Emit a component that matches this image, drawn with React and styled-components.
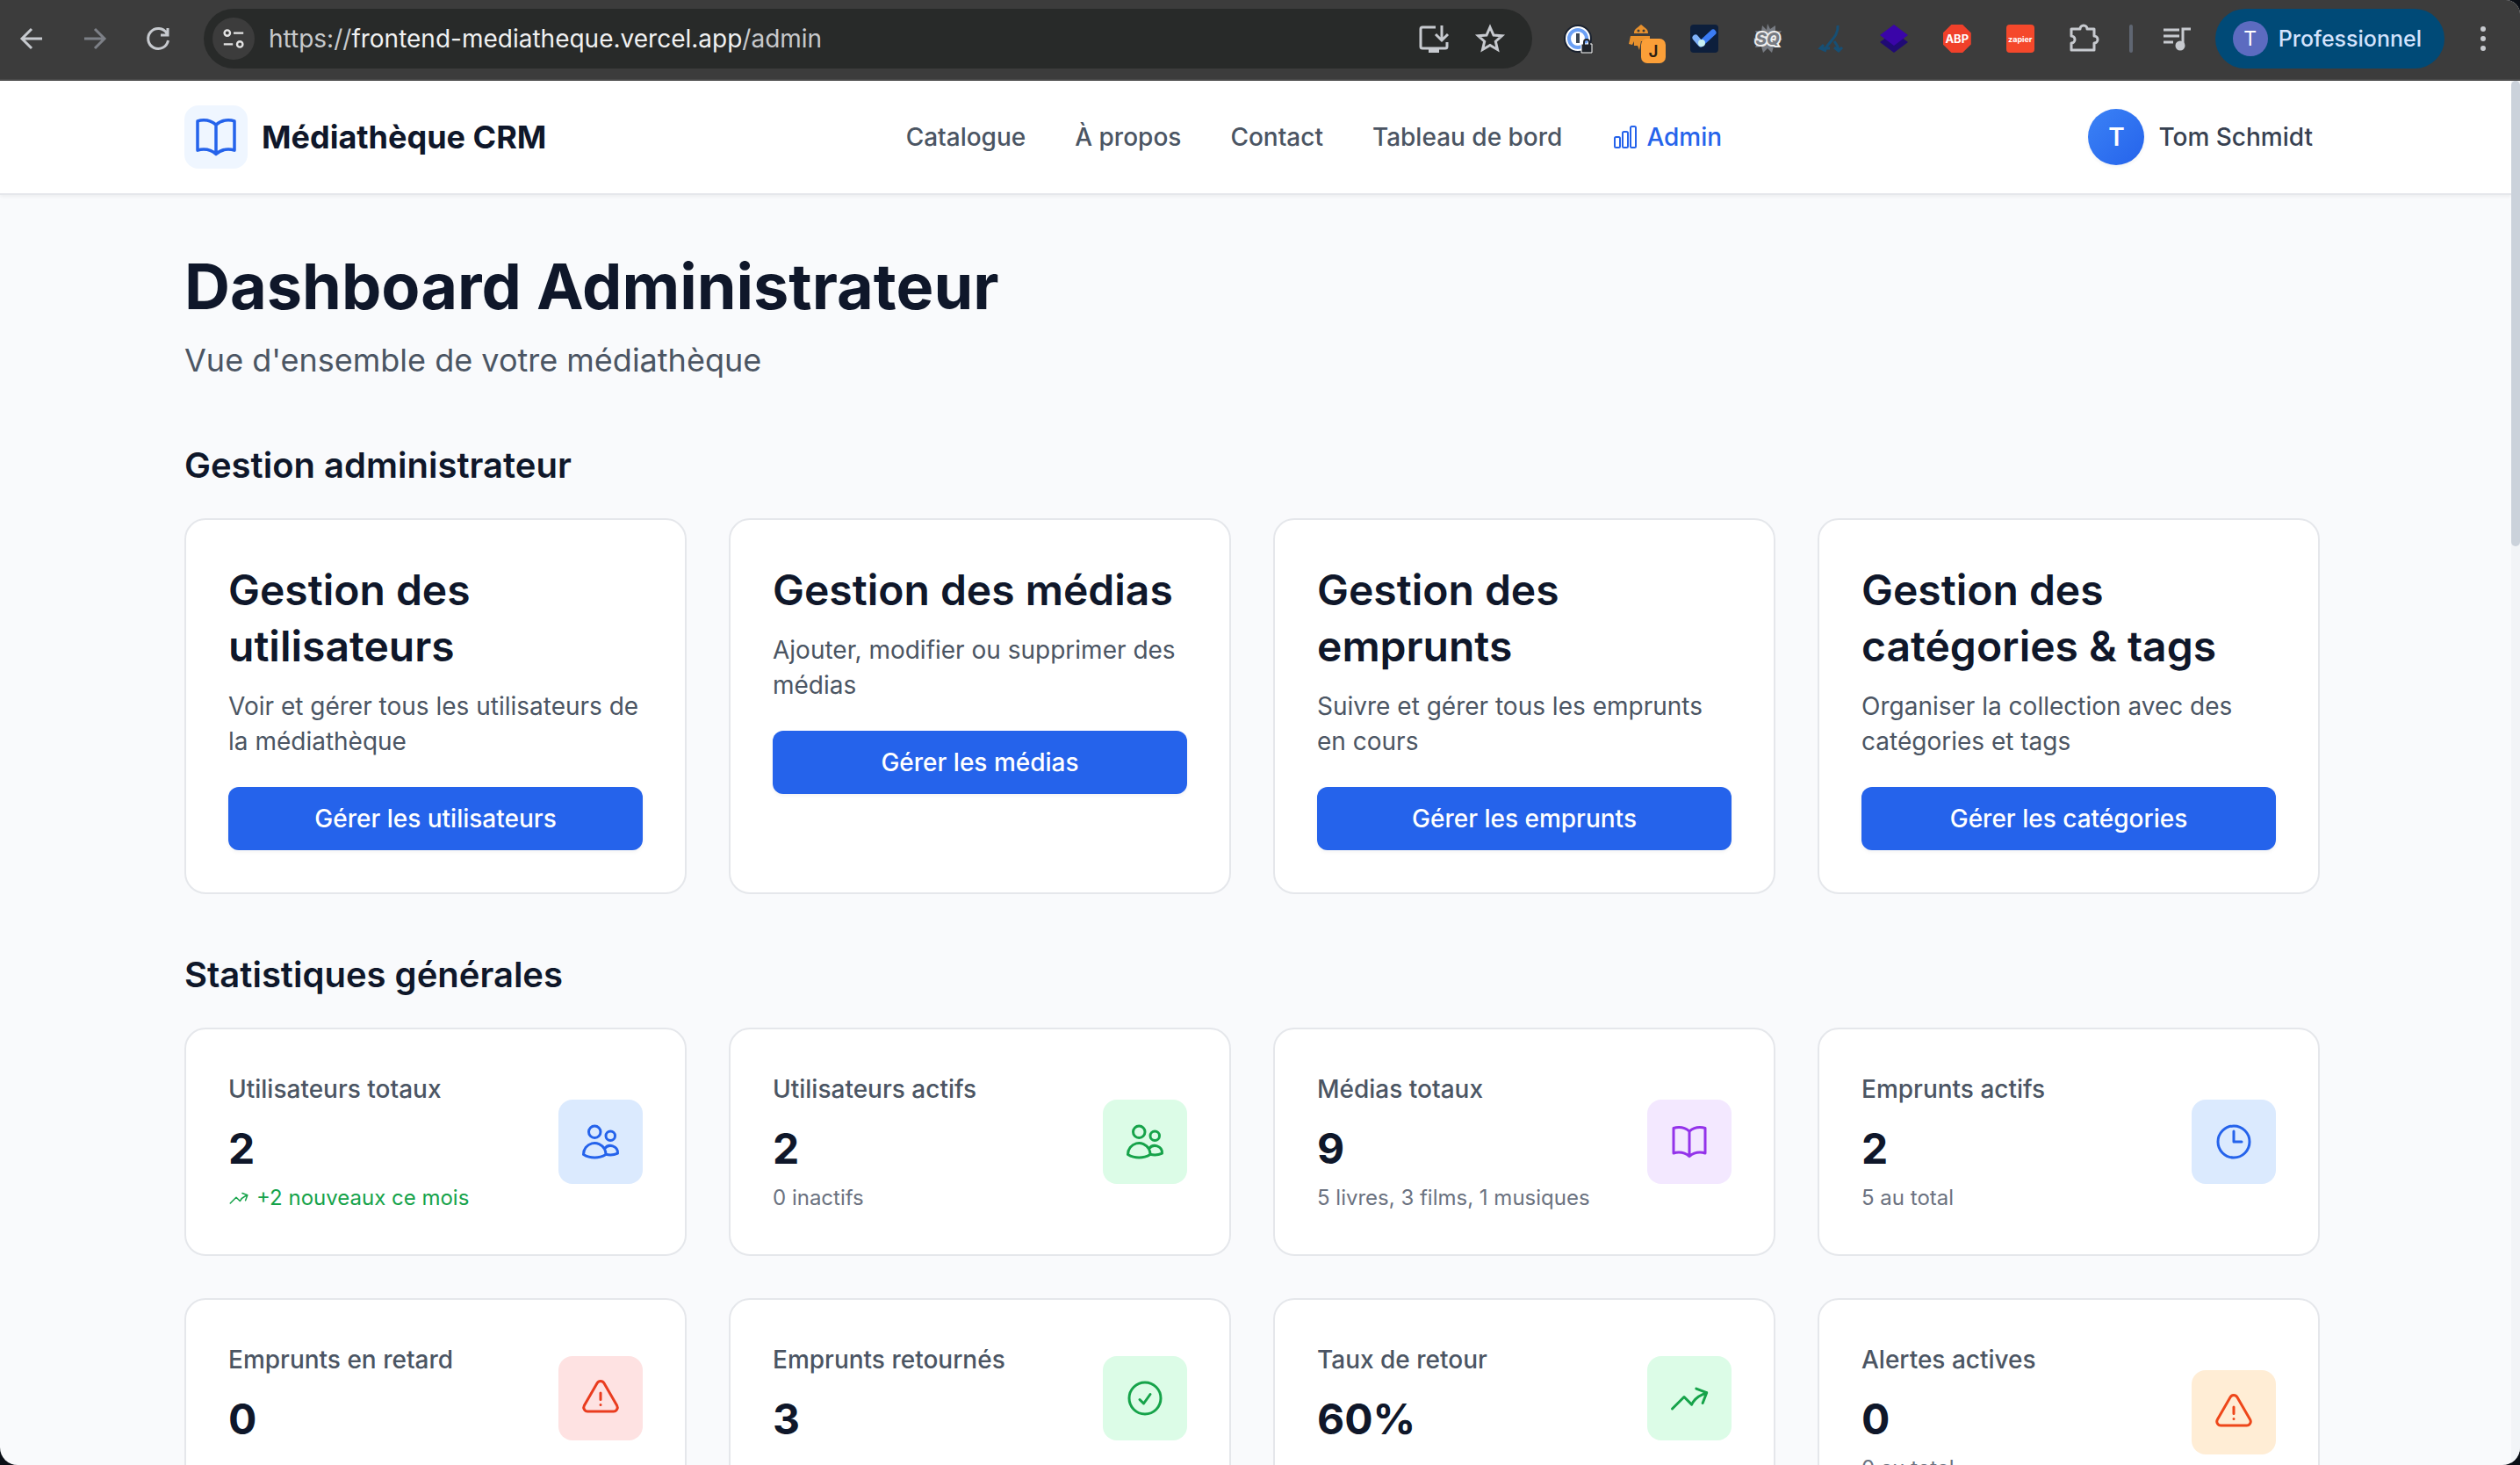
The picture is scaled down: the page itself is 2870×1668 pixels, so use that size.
import React from 'react';
import styled, { createGlobalStyle } from 'styled-components';

const GlobalStyle = createGlobalStyle`
  *, *::before, *::after { box-sizing: border-box; }
  body { margin: 0; background: #0b0f16; font-family: Inter, "Liberation Sans", sans-serif; color: #0f172a; -webkit-font-smoothing: antialiased; }
  h1, h2, h3, p { margin: 0; }
  button { font: inherit; border: 0; padding: 0; background: none; cursor: pointer; }
  a { color: inherit; text-decoration: none; }
`;

const Window = styled.div`
  height: 100vh;
  display: flex;
  flex-direction: column;
  overflow: hidden;
  border-radius: 0 16px 20px 20px;
  background: #f9fafc;
`;

/* ---------- browser toolbar ---------- */

const Toolbar = styled.div`
  flex: none;
  height: 92px;
  padding: 0 22px 2px 16px;
  display: flex;
  align-items: center;
  background: #3c3c3c;
  border-bottom: 2px solid #4a4a4a;
`;

const NavButtons = styled.div`
  display: flex;
  gap: 32px;
  margin-right: 32px;
`;

const ToolButton = styled.button`
  width: 40px;
  height: 48px;
  display: grid;
  place-items: center;
  color: ${(p) => (p.$dim ? '#7d8087' : '#c7cacf')};
`;

const Omnibox = styled.div`
  flex: 1;
  height: 68px;
  padding: 0 28px 0 10px;
  display: flex;
  align-items: center;
  gap: 16px;
  border-radius: 34px;
  background: #282a29;
`;

const SiteButton = styled.button`
  width: 48px;
  height: 48px;
  border-radius: 24px;
  display: grid;
  place-items: center;
  background: #3c3c3c;
  color: #e3e3e3;
`;

const Url = styled.div`
  flex: 1;
  font-size: 28px;
  line-height: 40px;
  color: #c7c9cc;
  white-space: nowrap;
  span { color: #f0f1f2; }
`;

const OmniActions = styled.div`
  display: flex;
  gap: 24px;
`;

const Extensions = styled.div`
  display: flex;
  align-items: center;
  gap: 32px;
  margin: 0 30px 0 32px;
`;

const Separator = styled.span`
  width: 4px;
  height: 32px;
  border-radius: 2px;
  background: #5f6672;
`;

const AbpBadge = styled.span`
  width: 40px;
  height: 40px;
  display: grid;
  place-items: center;
`;

const AbpShape = styled.span`
  width: 32px;
  height: 32px;
  display: grid;
  place-items: center;
  background: #f0402a;
  clip-path: polygon(30% 0, 70% 0, 100% 30%, 100% 70%, 70% 100%, 30% 100%, 0 70%, 0 30%);
  color: #fff;
  font-size: 13px;
  font-weight: 700;
`;

const ZapierTile = styled.span`
  width: 32px;
  height: 32px;
  margin: 0 4px;
  display: grid;
  place-items: center;
  border-radius: 4px;
  background: #f5482b;
  color: #fff;
  font-size: 9px;
  font-weight: 700;
`;

const Profile = styled.button`
  height: 68px;
  padding: 0 26px 0 20px;
  margin: 0 24px;
  display: flex;
  align-items: center;
  gap: 12px;
  border-radius: 34px;
  background: #004a77;
  color: #d3e3fd;
  font-size: 25px;
  font-weight: 500;
`;

const ProfileInitial = styled.span`
  width: 40px;
  height: 40px;
  border-radius: 20px;
  display: grid;
  place-items: center;
  background: #5c6bc0;
  color: #fff;
  font-size: 23px;
  font-weight: 400;
`;

/* ---------- page frame ---------- */

const Viewport = styled.div`
  flex: 1;
  min-height: 0;
  display: flex;
`;

const Page = styled.div`
  flex: 1;
  min-width: 0;
  overflow: hidden;
`;

const ScrollTrack = styled.div`
  width: 10px;
  background: #f2f4f7;
`;

const ScrollThumb = styled.div`
  height: 530px;
  border-radius: 6px;
  background: #cbd2db;
`;

const Header = styled.header`
  padding: 0 8px 0 0;
  background: #fff;
  border-bottom: 2px solid #e5e7eb;
  box-shadow: 0 2px 4px rgba(0, 0, 0, 0.05);
`;

const Container = styled.div`
  max-width: 2560px;
  margin: 0 auto;
  padding: 0 64px;
`;

const HeaderRow = styled(Container)`
  height: 128px;
  display: flex;
  align-items: center;
  justify-content: space-between;
`;

const Brand = styled.a`
  display: flex;
  align-items: center;
  gap: 16px;
  font-size: 36px;
  line-height: 56px;
  font-weight: 700;
`;

const BrandTile = styled.span`
  width: 72px;
  height: 72px;
  border-radius: 16px;
  display: grid;
  place-items: center;
  background: #eff6ff;
  color: #2563eb;
`;

const Nav = styled.nav`
  display: flex;
  align-items: center;
  gap: 56px;
`;

const NavLink = styled.a`
  display: flex;
  align-items: center;
  gap: 8px;
  font-size: 28px;
  line-height: 40px;
  font-weight: 500;
  color: ${(p) => (p.$active ? '#2563eb' : '#4b5563')};
`;

const UserButton = styled.button`
  display: flex;
  align-items: center;
  gap: 16px;
  padding: 0 8px;
  font-size: 28px;
  line-height: 40px;
  font-weight: 500;
  color: #374151;
`;

const Avatar = styled.span`
  width: 64px;
  height: 64px;
  border-radius: 32px;
  display: grid;
  place-items: center;
  background: linear-gradient(135deg, #3b82f6, #2563eb);
  box-shadow: 0 2px 4px rgba(0, 0, 0, 0.05);
  color: #fff;
  font-weight: 600;
`;

/* ---------- dashboard ---------- */

const Main = styled.main`
  padding: 64px 8px 64px 0;
`;

const PageTitle = styled.h1`
  font-size: 72px;
  line-height: 80px;
  font-weight: 700;
`;

const PageLead = styled.p`
  margin-top: 16px;
  font-size: 36px;
  line-height: 56px;
  color: #4b5563;
`;

const Section = styled.section`
  margin-top: 64px;
`;

const SectionTitle = styled.h2`
  margin-bottom: 32px;
  font-size: 40px;
  line-height: 56px;
  font-weight: 600;
`;

const Grid = styled.div`
  display: grid;
  grid-template-columns: repeat(4, minmax(0, 1fr));
  gap: 48px;
`;

const Card = styled.article`
  padding: 48px;
  border: 2px solid #e5e7eb;
  border-radius: 24px;
  background: #fff;
`;

const CardTitle = styled.h3`
  margin-bottom: 16px;
  font-size: 48px;
  line-height: 64px;
  font-weight: 600;
`;

const CardText = styled.p`
  margin-bottom: 32px;
  font-size: 28px;
  line-height: 40px;
  color: #4b5563;
`;

const CardButton = styled.button`
  width: 100%;
  height: 72px;
  border-radius: 12px;
  background: #2563eb;
  box-shadow: 0 2px 4px rgba(0, 0, 0, 0.05);
  color: #fff;
  font-size: 28px;
  font-weight: 500;
`;

const StatRow = styled.div`
  display: flex;
  align-items: center;
  justify-content: space-between;
`;

const StatLabel = styled.p`
  margin-bottom: 16px;
  font-size: 28px;
  line-height: 40px;
  font-weight: 500;
  color: #4b5563;
`;

const StatValue = styled.p`
  margin-bottom: 8px;
  font-size: 48px;
  line-height: 64px;
  font-weight: 700;
`;

const StatNote = styled.p`
  display: flex;
  align-items: center;
  gap: 8px;
  font-size: 24px;
  line-height: 32px;
  color: ${(p) => (p.$positive ? '#16a34a' : '#6b7280')};
`;

const tones = {
  blue: ['#dbeafe', '#2563eb'],
  green: ['#dcfce7', '#16a34a'],
  purple: ['#f3e8ff', '#9333ea'],
  red: ['#fee2e2', '#e93c1f'],
  orange: ['#ffedd5', '#ee471a'],
};

const StatIcon = styled.span`
  width: 96px;
  height: 96px;
  border-radius: 16px;
  display: grid;
  place-items: center;
  background: ${(p) => tones[p.$tone][0]};
  color: ${(p) => tones[p.$tone][1]};
`;

/* ---------- drawings ---------- */

const outlines = {
  book: 'M12 6.042A8.967 8.967 0 0 0 6 3.75c-1.052 0-2.062.18-3 .512v14.25A8.987 8.987 0 0 1 6 18c2.305 0 4.408.867 6 2.292m0-14.25a8.966 8.966 0 0 1 6-2.292c1.052 0 2.062.18 3 .512v14.25A8.987 8.987 0 0 0 18 18a8.967 8.967 0 0 0-6 2.292m0-14.25v14.25',
  users: 'M15 19.128a9.38 9.38 0 0 0 2.625.372 9.337 9.337 0 0 0 4.121-.952 4.125 4.125 0 0 0-7.533-2.493M15 19.128v-.003c0-1.113-.285-2.16-.786-3.07M15 19.128v.106A12.318 12.318 0 0 1 8.624 21c-2.331 0-4.512-.645-6.374-1.766l-.001-.109a6.375 6.375 0 0 1 11.964-3.07M12 6.375a3.375 3.375 0 1 1-6.75 0 3.375 3.375 0 0 1 6.75 0Zm8.25 2.25a2.625 2.625 0 1 1-5.25 0 2.625 2.625 0 0 1 5.25 0Z',
  clock: 'M12 6v6h4.5m4.5 0a9 9 0 1 1-18 0 9 9 0 0 1 18 0Z',
  alert: 'M12 9v3.75m-9.303 3.376c-.866 1.5.217 3.374 1.948 3.374h14.71c1.73 0 2.813-1.874 1.948-3.374L13.949 3.378c-.866-1.5-3.032-1.5-3.898 0L2.697 16.126ZM12 15.75h.007v.008H12v-.008Z',
  check: 'M9 12.75 11.25 15 15 9.75M21 12a9 9 0 1 1-18 0 9 9 0 0 1 18 0Z',
  trend: 'M2.25 18 9 11.25l4.306 4.306a11.95 11.95 0 0 1 5.814-5.518l2.74-1.22m0 0-5.94-2.281m5.94 2.28-2.28 5.941',
  chart: 'M3 13.125C3 12.504 3.504 12 4.125 12h2.25c.621 0 1.125.504 1.125 1.125v6.75C7.5 20.496 6.996 21 6.375 21h-2.25A1.125 1.125 0 0 1 3 19.875v-6.75ZM9.75 8.625c0-.621.504-1.125 1.125-1.125h2.25c.621 0 1.125.504 1.125 1.125v11.25c0 .621-.504 1.125-1.125 1.125h-2.25a1.125 1.125 0 0 1-1.125-1.125V8.625ZM16.5 4.125c0-.621.504-1.125 1.125-1.125h2.25C20.496 3 21 3.504 21 4.125v15.75c0 .621-.504 1.125-1.125 1.125h-2.25a1.125 1.125 0 0 1-1.125-1.125V4.125Z',
};

const Icon = ({ name, size = 48 }) => (
  <svg width={size} height={size} viewBox="0 0 24 24" fill="none" stroke="currentColor" strokeWidth="1.5" strokeLinecap="round" strokeLinejoin="round" aria-hidden="true">
    <path d={outlines[name]} />
  </svg>
);

const Glyph = ({ size = 40, children }) => (
  <svg width={size} height={size} viewBox="0 0 40 40" fill="none" stroke="currentColor" strokeWidth="3" aria-hidden="true">
    {children}
  </svg>
);

/* ---------- content ---------- */

const management = [
  ['Gestion des utilisateurs', 'Voir et gérer tous les utilisateurs de la médiathèque', 'Gérer les utilisateurs'],
  ['Gestion des médias', 'Ajouter, modifier ou supprimer des médias', 'Gérer les médias'],
  ['Gestion des emprunts', 'Suivre et gérer tous les emprunts en cours', 'Gérer les emprunts'],
  ['Gestion des catégories & tags', 'Organiser la collection avec des catégories et tags', 'Gérer les catégories'],
];

const stats = [
  { label: 'Utilisateurs totaux', value: '2', note: '+2 nouveaux ce mois', positive: true, icon: 'users', tone: 'blue' },
  { label: 'Utilisateurs actifs', value: '2', note: '0 inactifs', icon: 'users', tone: 'green' },
  { label: 'Médias totaux', value: '9', note: '5 livres, 3 films, 1 musiques', icon: 'book', tone: 'purple' },
  { label: 'Emprunts actifs', value: '2', note: '5 au total', icon: 'clock', tone: 'blue' },
  { label: 'Emprunts en retard', value: '0', icon: 'alert', tone: 'red' },
  { label: 'Emprunts retournés', value: '3', icon: 'check', tone: 'green' },
  { label: 'Taux de retour', value: '60%', icon: 'trend', tone: 'green' },
  { label: 'Alertes actives', value: '0', note: '0 au total', icon: 'alert', tone: 'orange' },
];

const BrowserBar = () => (
  <Toolbar>
    <NavButtons>
      <ToolButton aria-label="Précédent"><Glyph><path d="M32 20H9M20 9 9 20l11 11" /></Glyph></ToolButton>
      <ToolButton $dim aria-label="Suivant"><Glyph><path d="M8 20h23M20 9l11 11-11 11" /></Glyph></ToolButton>
      <ToolButton aria-label="Recharger"><Glyph><path d="M30 14a11.500 11.500 0 1 0 1.500 8M31 8v8h-8" /></Glyph></ToolButton>
    </NavButtons>
    <Omnibox>
      <SiteButton aria-label="Informations sur le site">
        <Glyph size={32}><circle cx="11" cy="12" r="4" /><path d="M20 12h14M6 28h13" /><circle cx="29" cy="28" r="4" /></Glyph>
      </SiteButton>
      <Url>https://<span>frontend-mediatheque.vercel.app</span>/admin</Url>
      <OmniActions>
        <ToolButton aria-label="Installer"><Glyph><path d="M22 7H7a2 2 0 0 0-2 2v20a2 2 0 0 0 2 2h26a2 2 0 0 0 2-2v-5M29 5v16M22 15l7 7 7-7" /><path d="M14 34h12" strokeWidth="4" /></Glyph></ToolButton>
        <ToolButton aria-label="Favoris"><Glyph><path d="m20 7 4 9 9.500.800-7.200 6.400 2.200 9.300L20 27.500l-8.500 5 2.200-9.300-7.200-6.400L16 16z" /></Glyph></ToolButton>
      </OmniActions>
    </Omnibox>
    <Extensions>
      <Glyph>
        <circle cx="20" cy="20" r="15" fill="#fff" stroke="#1a2230" strokeWidth="2" />
        <circle cx="20" cy="20" r="10" stroke="#6ba0f5" strokeWidth="4" />
        <path d="M20 14v11" stroke="#3c4654" strokeWidth="4" />
        <path d="M24 26h12v10H24z" fill="#1f2329" stroke="#fff" strokeWidth="1" />
        <path d="M27 27v-3a3 3 0 0 1 6 0v3" stroke="#1f2329" strokeWidth="2" />
      </Glyph>
      <svg width="40" height="56" viewBox="0 0 40 56" overflow="visible" aria-hidden="true">
        <path d="M12 22c0-4 2-5 3-6 2-1 3-3 5-4 2 1 3 3 5 4 1 1 3 2 3 6z" fill="#e8912d" />
        <path d="M8 25h22v6H20l-2 10-2-5h-4v-5l-2 4-4-1z" fill="#e8912d" />
        <circle cx="17" cy="19" r="1.500" fill="#3c3c3c" /><circle cx="23" cy="19" r="1.500" fill="#3c3c3c" />
        <rect x="20" y="28" width="28" height="28" rx="7" fill="#fb9f38" />
        <text x="34" y="49" textAnchor="middle" fontSize="19" fontWeight="600" fill="#2b2012" fontFamily="Inter, sans-serif">J</text>
      </svg>
      <Glyph>
        <rect x="4" y="4" width="32" height="32" rx="4" fill="#0d1f3c" stroke="none" />
        <path d="m10 19 6 7" stroke="#7fb2fa" strokeWidth="7" strokeLinecap="round" />
        <path d="m17 25 13-12" stroke="#3b7cf5" strokeWidth="7" strokeLinecap="round" />
        <circle cx="17" cy="25" r="4" fill="#c8f0f2" stroke="none" />
      </Glyph>
      <Glyph>
        <path d="m20 3 3 6 6-4 0 7 7-1-4 6 5 4-6 2 3 7-7-1-2 7-5-5-5 5-2-7-7 1 3-7-5-3 5-3-3-6 7 1 1-7 5 5z" fill="#777b82" stroke="none" />
        <text x="20" y="27" textAnchor="middle" fontSize="19" fontWeight="800" fontStyle="italic" fill="#777b82" stroke="#eee" strokeWidth="4" paintOrder="stroke" fontFamily="Inter, sans-serif">SQ</text>
      </Glyph>
      <Glyph><path d="M28 5c1 11-7 16-14 26M8 31h11M12 27l-4 4 7 3M24 23c2 3 4 5 5 9M24 30l5 4 4-4" stroke="#174f74" /></Glyph>
      <Glyph>
        <path d="m20 12 16 12-16 12L4 24z" fill="#200a75" stroke="none" />
        <path d="m20 4 16 12-16 12L4 16z" fill="#3a05a8" stroke="none" />
      </Glyph>
      <AbpBadge><AbpShape>ABP</AbpShape></AbpBadge>
      <ZapierTile>zapier</ZapierTile>
      <ToolButton aria-label="Extensions"><Glyph><path d="M6 9h10a4 4 0 0 1 8 0h8v8a4 4 0 0 1 0 8v8H6v-8a4 4 0 0 0 0-8z" strokeLinejoin="round" /></Glyph></ToolButton>
      <Separator />
    </Extensions>
    <ToolButton aria-label="Médias"><Glyph><path d="M5 10h18M5 17h18M5 24h11" /><path d="M27 28V9h9" /><circle cx="24" cy="28" r="4" fill="currentColor" /></Glyph></ToolButton>
    <Profile><ProfileInitial>T</ProfileInitial>Professionnel</Profile>
    <ToolButton aria-label="Menu"><Glyph><g fill="currentColor" stroke="none"><circle cx="20" cy="9" r="3" /><circle cx="20" cy="20" r="3" /><circle cx="20" cy="31" r="3" /></g></Glyph></ToolButton>
  </Toolbar>
);

const SiteHeader = () => (
  <Header>
    <HeaderRow>
      <Brand href="#"><BrandTile><Icon name="book" size={56} /></BrandTile>Médiathèque CRM</Brand>
      <Nav>
        <NavLink href="#">Catalogue</NavLink>
        <NavLink href="#">À propos</NavLink>
        <NavLink href="#">Contact</NavLink>
        <NavLink href="#">Tableau de bord</NavLink>
        <NavLink href="#" $active><Icon name="chart" size={32} />Admin</NavLink>
      </Nav>
      <UserButton><Avatar>T</Avatar>Tom Schmidt</UserButton>
    </HeaderRow>
  </Header>
);

export default function App() {
  return (
    <>
      <GlobalStyle />
      <Window>
        <BrowserBar />
        <Viewport>
          <Page>
            <SiteHeader />
            <Main>
              <Container>
                <PageTitle>Dashboard Administrateur</PageTitle>
                <PageLead>Vue d'ensemble de votre médiathèque</PageLead>
                <Section>
                  <SectionTitle>Gestion administrateur</SectionTitle>
                  <Grid>
                    {management.map(([title, text, action]) => (
                      <Card key={title}>
                        <CardTitle>{title}</CardTitle>
                        <CardText>{text}</CardText>
                        <CardButton>{action}</CardButton>
                      </Card>
                    ))}
                  </Grid>
                </Section>
                <Section>
                  <SectionTitle>Statistiques générales</SectionTitle>
                  <Grid>
                    {stats.map((s) => (
                      <Card key={s.label}>
                        <StatRow>
                          <div>
                            <StatLabel>{s.label}</StatLabel>
                            <StatValue>{s.value}</StatValue>
                            {s.note && (
                              <StatNote $positive={s.positive}>
                                {s.positive && <Icon name="trend" size={24} />}
                                {s.note}
                              </StatNote>
                            )}
                          </div>
                          <StatIcon $tone={s.tone}><Icon name={s.icon} /></StatIcon>
                        </StatRow>
                      </Card>
                    ))}
                  </Grid>
                </Section>
              </Container>
            </Main>
          </Page>
          <ScrollTrack><ScrollThumb /></ScrollTrack>
        </Viewport>
      </Window>
    </>
  );
}
